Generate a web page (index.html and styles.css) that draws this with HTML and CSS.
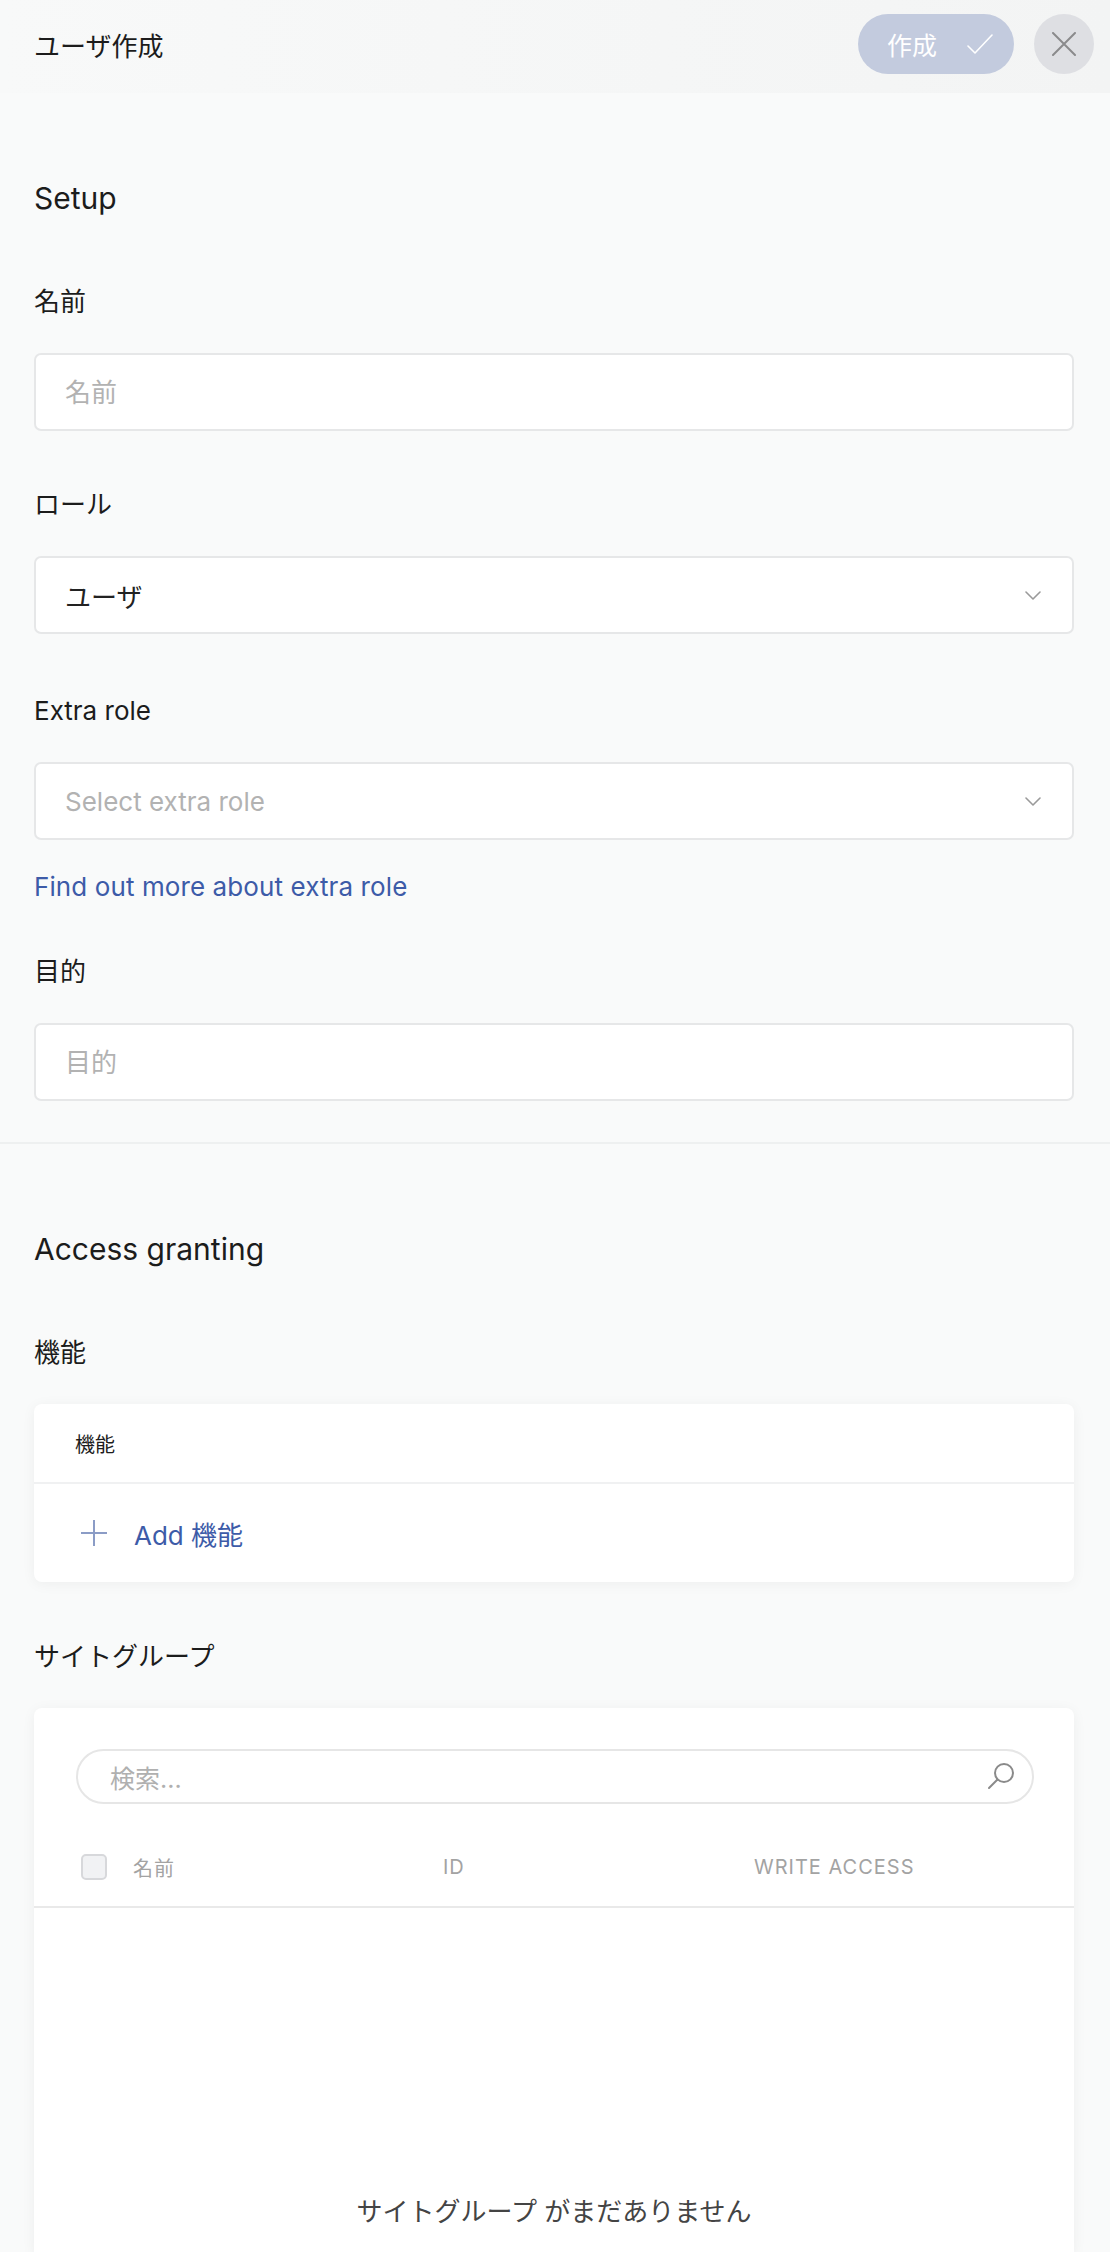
FILE: index.html
```html
<!DOCTYPE html>
<html>

<head>
    <title>ユーザ作成</title>
    <link rel="stylesheet" href="styles.css">
</head>

<body>
    <header class="topbar">
        <h1 class="topbar-title">ユーザ作成</h1>
        <div class="topbar-actions">
            <button class="btn-create" type="button">
                <span>作成</span>
                <svg width="26" height="20" viewBox="0 0 26 20" fill="none" stroke="#fff" stroke-width="1.6" stroke-linecap="round" stroke-linejoin="round">
                    <path d="M1 12 L8 19 L25 1"/>
                </svg>
            </button>
            <button class="btn-close" type="button">
                <svg width="24" height="24" viewBox="0 0 24 24" fill="none" stroke="#8a8a8c" stroke-width="2" stroke-linecap="round">
                    <path d="M1 1 L23 23 M23 1 L1 23"/>
                </svg>
            </button>
        </div>
    </header>

    <section class="section section-setup">
        <h2 class="section-title">Setup</h2>

        <div class="field">
            <label class="field-label" for="name">名前</label>
            <input class="field-input" id="name" type="text" placeholder="名前">
        </div>

        <div class="field field-role">
            <div class="field-label">ロール</div>
            <div class="field-input field-select">
                <span class="select-value">ユーザ</span>
                <svg class="chevron" width="16" height="9" viewBox="0 0 16 9" fill="none" stroke="#9a9a9a" stroke-width="1.6" stroke-linecap="round" stroke-linejoin="round">
                    <path d="M1 1 L8 8 L15 1"/>
                </svg>
            </div>
        </div>

        <div class="field field-tight">
            <div class="field-label">Extra role</div>
            <div class="field-input field-select">
                <span class="select-placeholder">Select extra role</span>
                <svg class="chevron" width="16" height="9" viewBox="0 0 16 9" fill="none" stroke="#9a9a9a" stroke-width="1.6" stroke-linecap="round" stroke-linejoin="round">
                    <path d="M1 1 L8 8 L15 1"/>
                </svg>
            </div>
        </div>
        <a class="help-link" href="#">Find out more about extra role</a>

        <div class="field field-last">
            <label class="field-label" for="purpose">目的</label>
            <input class="field-input" id="purpose" type="text" placeholder="目的">
        </div>
    </section>

    <section class="section section-access">
        <h2 class="section-title">Access granting</h2>

        <div class="field-label">機能</div>
        <div class="card">
            <div class="card-head">機能</div>
            <a class="add-row" href="#">
                <svg width="28" height="28" viewBox="0 0 28 28" fill="none" stroke="#8b9cc6" stroke-width="2">
                    <path d="M14 1 V27 M1 14 H27"/>
                </svg>
                <span>Add 機能</span>
            </a>
        </div>

        <div class="field-label label-groups">サイトグループ</div>
        <div class="card card-groups">
            <div class="search-wrap">
                <div class="search">
                    <span class="search-placeholder">検索...</span>
                    <svg width="30" height="28" viewBox="0 0 30 28" fill="none" stroke="#8a8a8a" stroke-width="2" stroke-linecap="round">
                        <circle cx="18" cy="10" r="9"/>
                        <path d="M11.5 16.5 L3 25"/>
                    </svg>
                </div>
            </div>
            <div class="table-head">
                <span class="checkbox"></span>
                <span class="col col-name">名前</span>
                <span class="col col-id">ID</span>
                <span class="col col-write">WRITE ACCESS</span>
            </div>
            <div class="table-empty">サイトグループ がまだありません</div>
        </div>
    </section>
</body>

</html>
```

FILE: styles.css
```css
body {
    margin: 0;
    background-color: #f9fafa;
    font-family: Inter, "Noto Sans CJK JP", sans-serif;
    color: #1c1c1c;
}

.topbar {
    height: 93px;
    display: flex;
    align-items: center;
    justify-content: space-between;
    padding: 0 16px 0 34px;
    background: linear-gradient(to right, #f8f9f9, #f3f4f4);
}

.topbar-title {
    margin: 0;
    font-size: 26px;
    font-weight: normal;
    margin-top: -4px;
}

.topbar-actions {
    display: flex;
    gap: 20px;
    margin-top: -5px;
}

.btn-create {
    height: 60px;
    width: 156px;
    border: none;
    border-radius: 30px;
    background-color: #c3cbde;
    display: flex;
    align-items: center;
    gap: 30px;
    padding: 0 0 0 29px;
    font-family: inherit;
    font-size: 25px;
    color: #fff;
}

.btn-close {
    width: 60px;
    height: 60px;
    border: none;
    border-radius: 50%;
    background-color: #dedfe3;
    display: flex;
    align-items: center;
    justify-content: center;
    padding: 0;
}

.section {
    padding: 0 36px 0 34px;
}

.section-setup {
    padding-bottom: 41px;
    border-bottom: 2px solid #eef0f0;
}

.section-title {
    margin: 85px 0 66px;
    font-size: 30px;
    line-height: 40px;
    font-weight: normal;
}

.field {
    margin-bottom: 56px;
}

.field-role {
    margin-bottom: 59px;
}

.field-tight {
    margin-bottom: 29px;
}

.field-last {
    margin-bottom: 0;
}

.field-label {
    display: block;
    font-size: 26px;
    line-height: 36px;
    margin-bottom: 33px;
}

.field-input {
    display: block;
    box-sizing: border-box;
    width: 100%;
    height: 78px;
    border: 2px solid #e6e7e8;
    border-radius: 7px;
    background-color: #fff;
    padding: 0 29px;
    font-family: inherit;
    font-size: 26px;
    color: #222;
    outline: none;
}

.field-input::placeholder {
    color: #b2b2b2;
}

.field-select {
    display: flex;
    align-items: center;
    justify-content: space-between;
}

.select-placeholder {
    color: #b2b2b2;
}

.chevron {
    margin-right: 2px;
}

.help-link {
    display: block;
    font-size: 26px;
    line-height: 36px;
    letter-spacing: 0.1px;
    color: #3d5ba8;
    text-decoration: none;
    margin-bottom: 49px;
}

.card {
    background-color: #fff;
    border-radius: 8px;
    box-shadow: 0 2px 14px rgba(0, 0, 0, 0.05);
}

.card-head {
    height: 80px;
    box-sizing: border-box;
    display: flex;
    align-items: center;
    padding: 0 41px;
    font-size: 20px;
    border-bottom: 2px solid #f0f1f2;
}

.add-row {
    height: 98px;
    display: flex;
    align-items: center;
    gap: 26px;
    padding: 0 46px;
    font-size: 26px;
    color: #3d5ba8;
    text-decoration: none;
}

.label-groups {
    margin-top: 57px;
}

.card-groups {
    border-radius: 8px 8px 0 0;
}

.search-wrap {
    padding: 41px 40px 0 42px;
}

.search {
    height: 55px;
    box-sizing: border-box;
    border: 2px solid #e6e6e6;
    border-radius: 28px;
    display: flex;
    align-items: center;
    justify-content: space-between;
    padding: 0 16px 0 32px;
    font-size: 25px;
    color: #b0b0b0;
}

.table-head {
    height: 78px;
    margin-top: 24px;
    display: flex;
    align-items: center;
    padding: 0 47px;
    border-bottom: 2px solid #e9e9e9;
    font-size: 20px;
    letter-spacing: 1px;
    color: #a3a3a3;
}

.checkbox {
    width: 26px;
    height: 26px;
    box-sizing: border-box;
    border: 2px solid #d7d8db;
    border-radius: 5px;
    background-color: #f1f2f4;
    margin-right: 26px;
}

.col-name {
    width: 310px;
}

.col-id {
    width: 311px;
}

.table-empty {
    height: 346px;
    padding-top: 286px;
    box-sizing: border-box;
    text-align: center;
    font-size: 26px;
    line-height: 36px;
    color: #444;
}
```
